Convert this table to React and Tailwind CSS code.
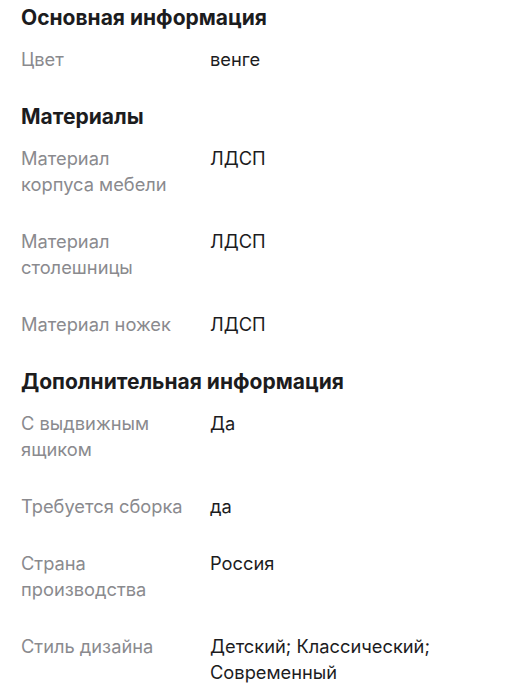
export default function App() {
  const sections = [
    { title: "Основная информация", rows: [["Цвет", "венге"]] },
    {
      title: "Материалы",
      rows: [
        ["Материал корпуса мебели", "ЛДСП"],
        ["Материал столешницы", "ЛДСП"],
        ["Материал ножек", "ЛДСП"],
      ],
    },
    {
      title: "Дополнительная информация",
      rows: [
        ["С выдвижным ящиком", "Да"],
        ["Требуется сборка", "да"],
        ["Страна производства", "Россия"],
        ["Стиль дизайна", "Детский; Классический; Современный"],
      ],
    },
  ];
  return (
    <div
      className="bg-white min-h-[700px] pl-[21px] pr-4 pt-[4px] flex flex-col gap-[31px]"
      style={{ fontFamily: "Inter, 'Noto Sans', sans-serif" }}
    >
      {sections.map((s) => (
        <div key={s.title} className="flex flex-col">
          <h2 className="text-[21px] leading-[28px] font-bold text-[#1c1c1e] mb-[14px]">{s.title}</h2>
          <div className="flex flex-col gap-[31px]">
            {s.rows.map(([k, v]) => (
              <div key={k} className="flex text-[18.3px] leading-[26px]">
                <div className="w-[164px] shrink-0 text-[#8a8a8e] mr-[25px]">{k}</div>
                <div className="text-[#1c1c1e] w-[250px]">{v}</div>
              </div>
            ))}
          </div>
        </div>
      ))}
    </div>
  );
}
